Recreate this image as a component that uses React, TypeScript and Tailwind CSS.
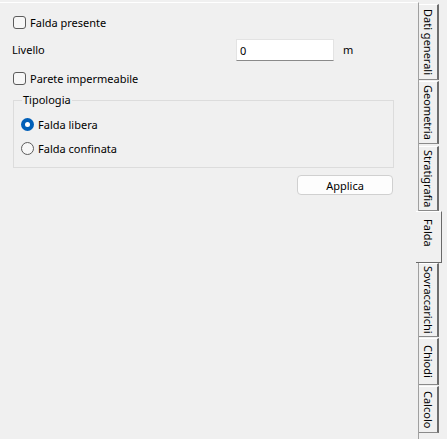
import React from "react";

const font = { fontFamily: '"Segoe UI", "Noto Sans", sans-serif' };

function CheckBox({ label }: { label: string }) {
  return (
    <label className="flex items-center h-[13px] text-[11px] text-black">
      <span className="w-[13px] h-[13px] rounded-[3px] border border-[#5c5c5c] bg-[#f7f7f7]" />
      <span className="ml-[4px] leading-none">{label}</span>
    </label>
  );
}

function Radio({ label, checked }: { label: string; checked?: boolean }) {
  return (
    <label className="flex items-center h-[13px] text-[11px] text-black">
      {checked ? (
        <span className="w-[13px] h-[13px] rounded-full bg-[#005fb8] flex items-center justify-center">
          <span className="w-[5px] h-[5px] rounded-full bg-white" />
        </span>
      ) : (
        <span className="w-[13px] h-[13px] rounded-full border border-[#5c5c5c] bg-[#f7f7f7]" />
      )}
      <span className="ml-[4px] leading-none">{label}</span>
    </label>
  );
}

const tabs = [
  { name: "Dati generali", h: 76, mb: 1 },
  { name: "Geometria", h: 63, mb: 2 },
  { name: "Stratigrafia", h: 65, mb: 0 },
  { name: "Falda", h: 52, mb: 0, active: true },
  { name: "Sovraccarichi", h: 74, mb: 1 },
  { name: "Chiodi", h: 47, mb: 1 },
  { name: "Calcolo", h: 47, mb: 0 },
];

export default function App() {
  return (
    <div className="w-[447px] h-[439px] bg-[#f0f0f0] flex items-start overflow-hidden" style={font}>
      {/* pannello */}
      <div className="w-[419px] h-[437px] mt-[2px] border-t border-white border-r border-r-[#a0a0a0] pl-[13px]">
        <div className="mt-[13px]">
          <CheckBox label="Falda presente" />
        </div>

        <div className="mt-[10px] flex items-center h-[22px] text-[11px] text-black">
          <span className="w-[224px] -ml-[1px]">Livello</span>
          <input
            className="w-[98px] h-[22px] bg-white border border-[#e3e3e3] border-b-[#8a8a8a] px-[3px] text-[11px] outline-none"
            defaultValue="0"
          />
          <span className="ml-[9px]">m</span>
        </div>

        <div className="mt-[11px]">
          <CheckBox label="Parete impermeabile" />
        </div>

        <fieldset className="mt-[7px] w-[381px] border border-[#dcdcdc] px-[7px] pb-[12px]">
          <legend className="ml-[1px] px-[1px] text-[11px] text-black leading-[16px]">Tipologia</legend>
          <div className="mt-[10px] flex flex-col gap-[11px]">
            <Radio label="Falda libera" checked />
            <Radio label="Falda confinata" />
          </div>
        </fieldset>

        <div className="w-[380px] flex justify-end mt-[7px]">
          <button className="w-[96px] h-[20px] rounded-[4px] border border-[#d0d0d0] bg-[#fdfdfd] text-[11px] text-black leading-none">
            Applica
          </button>
        </div>
      </div>

      {/* linguette */}
      <div className="flex flex-col pt-[4px]">
        {tabs.map((t) =>
          t.active ? (
            <div
              key={t.name}
              className="relative z-10 -ml-[3px] w-[26px] bg-[#f0f0f0] border-t border-white border-r border-b border-r-[#696969] border-b-[#696969] flex justify-center pt-[7px] text-[11px] text-black"
              style={{ height: t.h, marginBottom: t.mb }}
            >
              <span className="[writing-mode:vertical-rl] leading-none">{t.name}</span>
            </div>
          ) : (
            <div
              key={t.name}
              className="w-[20px] bg-[#f0f0f0] border-t border-white border-r-2 border-b border-r-[#6d6d6d] border-b-[#8a8a8a] flex items-center justify-center text-[11px] text-black"
              style={{ height: t.h, marginBottom: t.mb }}
            >
              <span className="[writing-mode:vertical-rl] leading-none">{t.name}</span>
            </div>
          )
        )}
        <div className="w-[20px] h-[20px]" />
      </div>
    </div>
  );
}
